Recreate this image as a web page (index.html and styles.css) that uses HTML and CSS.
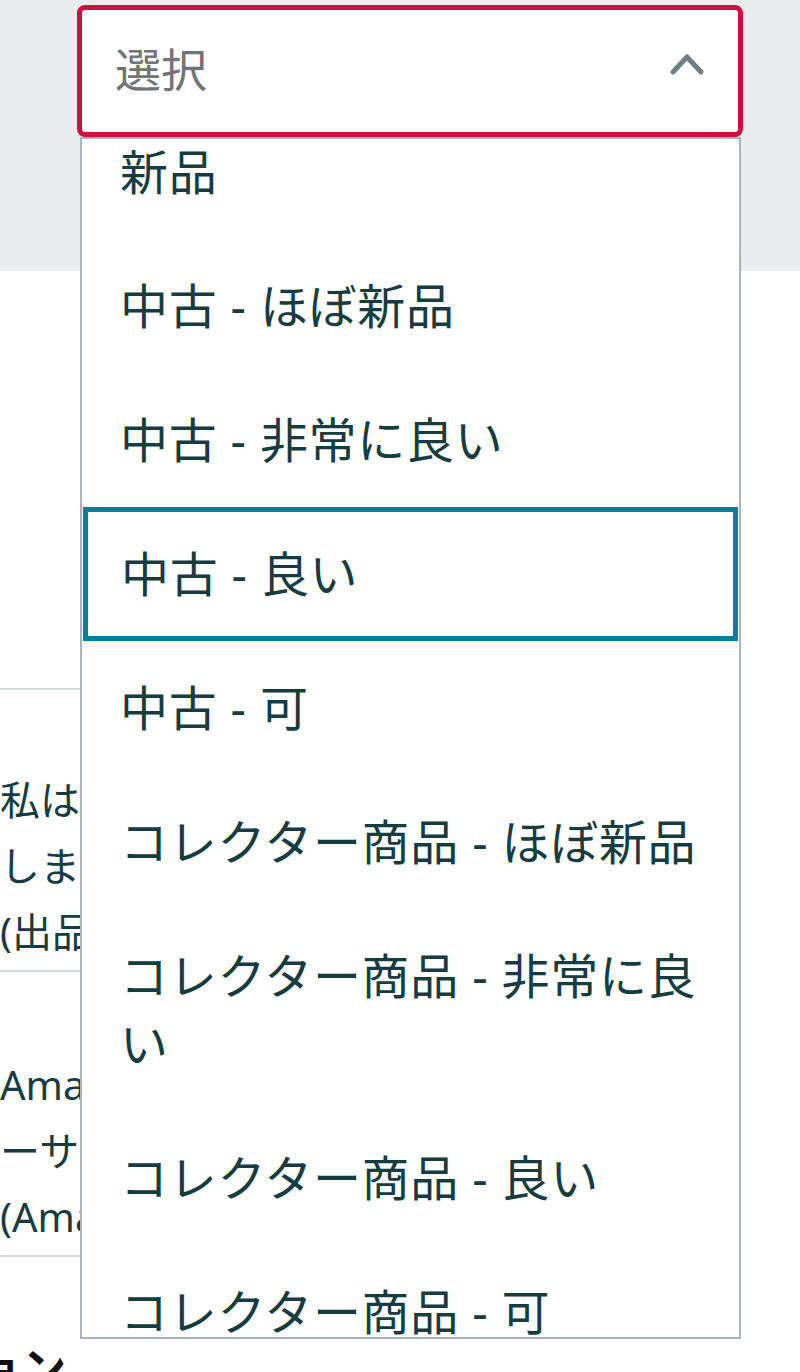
FILE: index.html
```html
<!DOCTYPE html>
<html lang="ja">
<head>
<meta charset="utf-8">
<title>コンディション選択</title>
<link rel="stylesheet" href="styles.css">
</head>
<body>
<div class="page">
  <header class="band">
    <div class="select" role="combobox" aria-expanded="true">
      <span class="placeholder">選択</span>
      <svg class="chevron" width="40" height="24" viewBox="0 0 40 24" aria-hidden="true">
        <polyline points="5,20 19,5 33,20" fill="none" stroke="#6d7f82" stroke-width="5" stroke-linecap="round" stroke-linejoin="round"/>
      </svg>
    </div>
  </header>

  <main class="content">
    <div class="option-card first">
      <span class="line">私はブランドオーナーです</span>
      <span class="line">します</span>
      <span class="line">(出品者)</span>
    </div>
    <div class="option-card second">
      <span class="line">Amazonフルフィルメント</span>
      <span class="line">ーサービス</span>
      <span class="line">(Amazon)</span>
    </div>
    <h2 class="section-title">オプション</h2>
  </main>

  <div class="listbox" role="listbox">
    <ul class="items">
      <li class="item">新品</li>
      <li class="item">中古 - ほぼ新品</li>
      <li class="item">中古 - 非常に良い</li>
      <li class="item active">中古 - 良い</li>
      <li class="item">中古 - 可</li>
      <li class="item">コレクター商品 - ほぼ新品</li>
      <li class="item">コレクター商品 - 非常に良い</li>
      <li class="item">コレクター商品 - 良い</li>
      <li class="item">コレクター商品 - 可</li>
    </ul>
  </div>
</div>
</body>
</html>
```

FILE: styles.css
```css
* {
  box-sizing: border-box;
}

html, body {
  margin: 0;
  padding: 0;
  background: #ffffff;
}

body {
  font-family: "Noto Sans", "Noto Sans CJK JP", sans-serif;
  color: #163c3f;
}

.page {
  position: relative;
  width: 800px;
  height: 1372px;
  overflow: hidden;
  background: #ffffff;
}

.band {
  height: 271px;
  background: #eaeded;
  padding: 5px 0 0 77px;
}

.select {
  position: relative;
  z-index: 2;
  width: 666px;
  height: 132px;
  background: #ffffff;
  border: 5px solid #cf0f3e;
  border-radius: 8px;
  display: flex;
  align-items: center;
  justify-content: space-between;
  padding: 0 30px 4px 33px;
}

.placeholder {
  font-size: 46px;
  line-height: 60px;
  color: #6f7575;
}

.chevron {
  display: block;
  margin-top: -10px;
}

.content {
  padding-top: 417px;
  width: 700px;
}

.option-card {
  border-top: 2px solid #d5dbdb;
  display: flex;
  flex-direction: column;
  font-size: 40px;
  line-height: 66px;
  white-space: nowrap;
  overflow: hidden;
}

.option-card.first {
  padding-top: 77px;
  padding-bottom: 5px;
}

.option-card.second {
  padding-top: 80px;
  padding-bottom: 5px;
  border-bottom: 2px solid #d5dbdb;
}

.line {
  display: block;
}

.section-title {
  margin: 78px 0 0 -154px;
  font-size: 44px;
  line-height: 66px;
  font-weight: 700;
  color: #0f1111;
  white-space: nowrap;
}

.listbox {
  position: absolute;
  z-index: 1;
  left: 80px;
  top: 137px;
  width: 661px;
  height: 1202px;
  background: #ffffff;
  border: 2px solid #a7b5b6;
  overflow: hidden;
}

.items {
  list-style: none;
  margin: -34px 0 0 0;
  padding: 0;
}

.item {
  font-size: 48px;
  line-height: 68px;
  letter-spacing: 0.7px;
  padding: 33px 38px;
  color: #163c3f;
}

.item.active {
  border: 5px solid #008296;
  padding: 28px 37px 28px 33px;
  margin: 0 1px 0 1px;
}
```
